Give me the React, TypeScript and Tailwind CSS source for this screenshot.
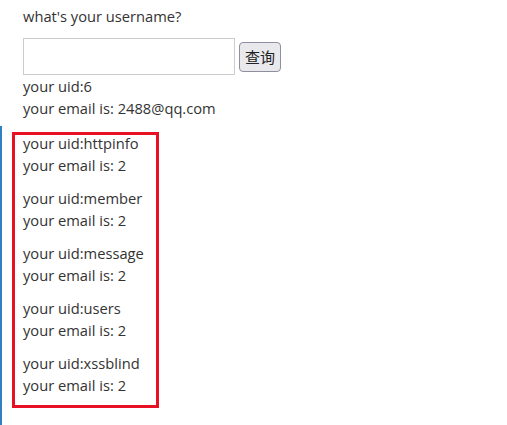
export default function App() {
  const rows = ["httpinfo", "member", "message", "users", "xssblind"];
  return (
    <div className="min-h-[425px] bg-white text-[#333] text-[14.7px] leading-[22px] font-['Open_Sans',sans-serif]">
      <div className="pl-[23px] pt-[5px]">
        <p>what's your username?</p>
        <div className="mt-[11px] flex items-center gap-[4px]">
          <input className="w-[212px] h-[37px] border border-[#ccc] bg-white outline-none px-2" />
          <button className="h-[30px] px-[5px] rounded-[4px] border border-[#8f8f9d] bg-[#e9e9ed] text-[15px] text-[#222] font-['Noto_Sans_CJK_SC',sans-serif] leading-none">
            查询
          </button>
        </div>
        <p>your uid:6</p>
        <p>your email is: 2488@qq.com</p>
      </div>
      <div className="mt-[7px] border-l-2 border-[#2f7fc1] pt-[6px] pb-[17px]">
        <div className="ml-[10px] w-[147px] border-[3px] border-[#e81123] pl-[8px] pb-[9px]">
          <div className="-mt-[3px]">
            {rows.map((r) => (
              <div key={r} className="mb-[11px] last:mb-0">
                <p>your uid:{r}</p>
                <p>your email is: 2</p>
              </div>
            ))}
          </div>
        </div>
      </div>
    </div>
  );
}
